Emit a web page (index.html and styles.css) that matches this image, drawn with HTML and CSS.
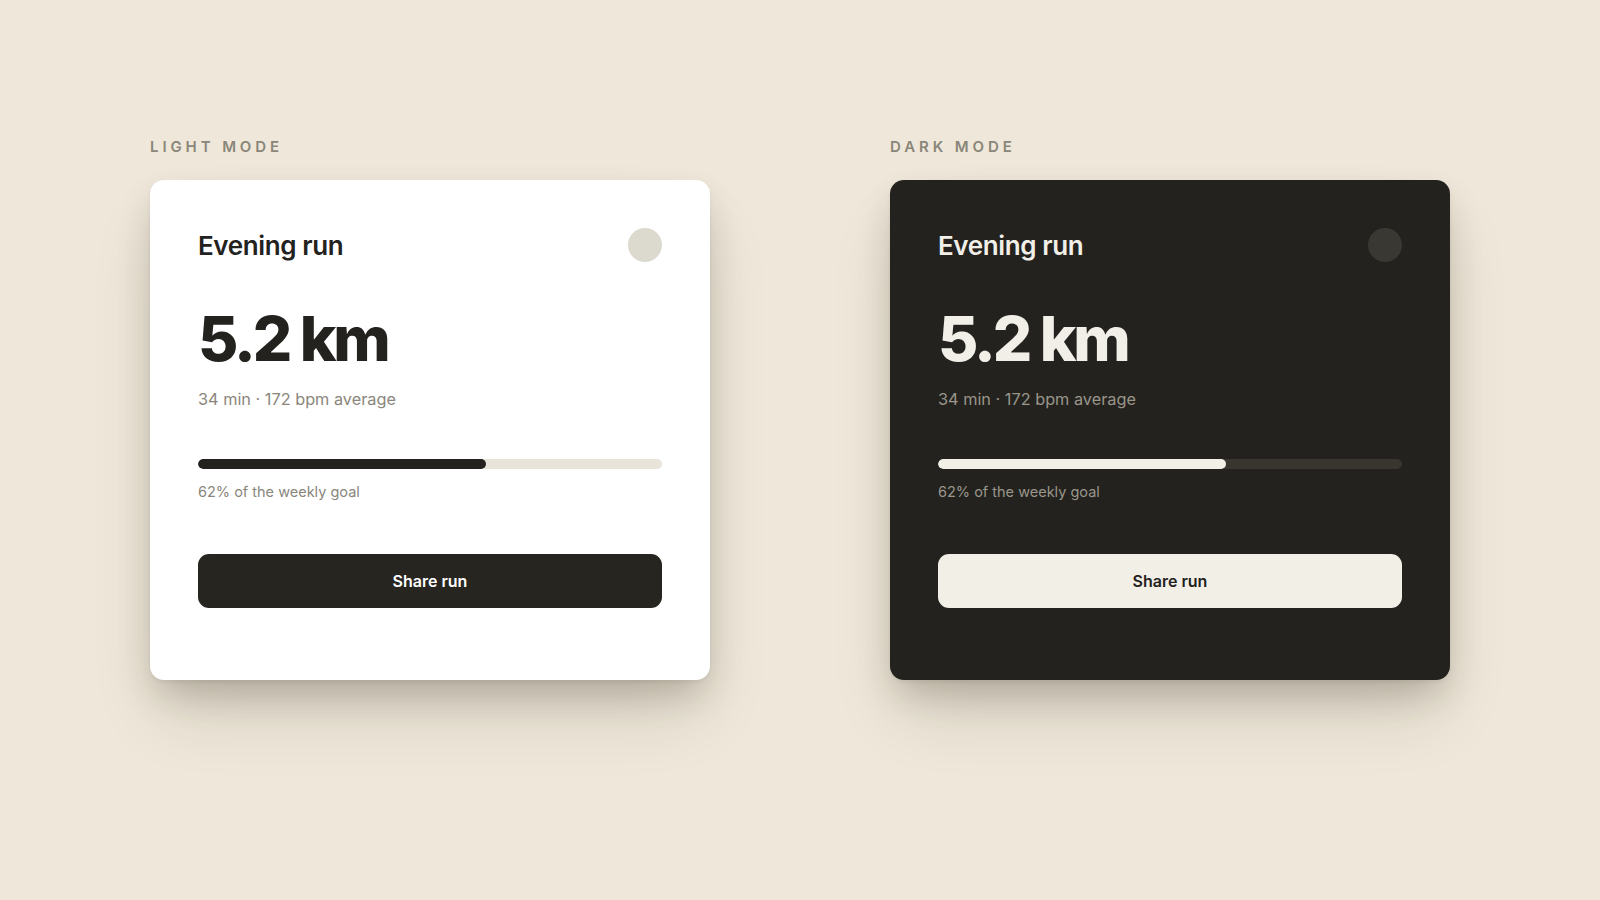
FILE: index.html
```html
<!DOCTYPE html>
<html lang="en">
<head>
    <meta charset="UTF-8">
    <meta name="viewport" content="width=device-width, initial-scale=1.0">
    <title>Run card – light and dark</title>
    <link rel="stylesheet" href="styles.css">
</head>
<body>
    <main class="preview">
        <!-- Light -->
        <section class="column">
            <h2 class="mode-label">Light mode</h2>
            <div class="card card-light">
                <div class="card-head">
                    <h3 class="card-title">Evening run</h3>
                    <span class="avatar"></span>
                </div>
                <p class="distance">5.2 km</p>
                <p class="meta">34 min · 172 bpm average</p>
                <div class="progress">
                    <div class="progress-fill" style="width: 62%"></div>
                </div>
                <p class="caption">62% of the weekly goal</p>
                <button class="share" type="button">Share run</button>
            </div>
        </section>

        <!-- Dark -->
        <section class="column">
            <h2 class="mode-label">Dark mode</h2>
            <div class="card card-dark">
                <div class="card-head">
                    <h3 class="card-title">Evening run</h3>
                    <span class="avatar"></span>
                </div>
                <p class="distance">5.2 km</p>
                <p class="meta">34 min · 172 bpm average</p>
                <div class="progress">
                    <div class="progress-fill" style="width: 62%"></div>
                </div>
                <p class="caption">62% of the weekly goal</p>
                <button class="share" type="button">Share run</button>
            </div>
        </section>
    </main>
</body>
</html>
```

FILE: styles.css
```css
body {
    margin: 0;
    padding: 0;
    min-height: 100vh;
    background-color: #efe8da;
    font-family: Inter, "Noto Sans", sans-serif;
    color: #23221e;
}

.preview {
    display: flex;
    justify-content: center;
    gap: 180px;
    padding-top: 137px;
}

.column {
    width: 560px;
}

.mode-label {
    margin: 0 0 23px;
    font-size: 15px;
    line-height: 20px;
    font-weight: 600;
    letter-spacing: 0.26em;
    text-transform: uppercase;
    color: #8a8679;
}

.card {
    box-sizing: border-box;
    height: 500px;
    padding: 48px;
    border-radius: 14px;
    box-shadow:
        0 2px 4px rgba(40, 34, 20, 0.06),
        0 18px 36px -6px rgba(40, 34, 20, 0.22),
        0 40px 70px -12px rgba(40, 34, 20, 0.16);
}

.card-head {
    display: flex;
    align-items: center;
    justify-content: space-between;
    height: 34px;
}

.card-title {
    margin: 0;
    padding-top: 2px;
    font-size: 26px;
    line-height: 32px;
    font-weight: 600;
    letter-spacing: -0.015em;
}

.avatar {
    width: 34px;
    height: 34px;
    border-radius: 50%;
}

.distance {
    margin: 45px 0 0;
    font-size: 62px;
    line-height: 64px;
    font-weight: 800;
    letter-spacing: -0.05em;
}

.meta {
    margin: 16px 0 0;
    font-size: 16.3px;
    line-height: 24px;
}

.progress {
    height: 10px;
    margin-top: 48px;
    border-radius: 5px;
    overflow: hidden;
}

.progress-fill {
    height: 100%;
    border-radius: 5px;
}

.caption {
    margin: 12px 0 0;
    font-size: 14.5px;
    line-height: 21px;
}

.share {
    display: block;
    width: 100%;
    height: 54px;
    margin-top: 52px;
    border: none;
    border-radius: 11px;
    font-family: inherit;
    font-size: 16px;
    font-weight: 600;
    cursor: pointer;
}

/* light theme */
.card-light {
    background: #ffffff;
    color: #23221e;
}

.card-light .avatar {
    background: #dcd9ce;
}

.card-light .meta,
.card-light .caption {
    color: #8a867c;
}

.card-light .progress {
    background: #e8e4da;
}

.card-light .progress-fill {
    background: #23221e;
}

.card-light .share {
    background: #27251f;
    color: #ffffff;
}

/* dark theme */
.card-dark {
    background: #23221e;
    color: #f2efe8;
}

.card-dark .avatar {
    background: #3a3832;
}

.card-dark .meta,
.card-dark .caption {
    color: #9a968b;
}

.card-dark .progress {
    background: #38362f;
}

.card-dark .progress-fill {
    background: #f2efe6;
}

.card-dark .share {
    background: #f2efe7;
    color: #23221e;
}
```
